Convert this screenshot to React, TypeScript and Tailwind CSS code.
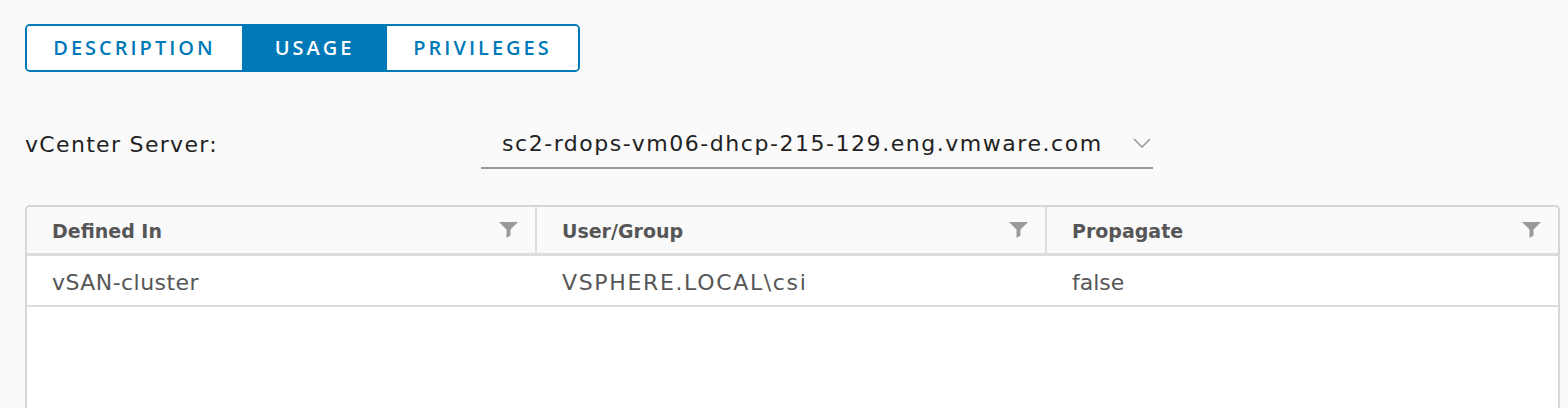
import React from "react";

function Filter() {
  return (
    <svg width="19" height="16" viewBox="0 0 19 16" className="shrink-0">
      <polygon points="0,0 19,0 11.5,7.5 11.5,13.5 7.5,16 7.5,7.5" fill="#9a9a9a" />
    </svg>
  );
}

function Chevron() {
  return (
    <svg width="18" height="10" viewBox="0 0 18 10">
      <polyline points="1,1 9,9 17,1" fill="none" stroke="#9a9a9a" strokeWidth="1.6" />
    </svg>
  );
}

const body = { fontFamily: "'DejaVu Sans', 'Open Sans', sans-serif" };

export default function App() {
  const cols = ["Defined In", "User/Group", "Propagate"];
  const vals = [
    { t: "vSAN-cluster", c: "tracking-[0.02em]" },
    { t: "VSPHERE.LOCAL\\csi", c: "tracking-[0.075em]" },
    { t: "false", c: "tracking-[0em]" },
  ];
  return (
    <div
      className="w-[1568px] h-[408px] overflow-hidden bg-[#fafafa] pl-[25px] pt-[24px] flex flex-col"
      style={{ fontFamily: "'Open Sans', Lato, sans-serif" }}
    >
      <div className="flex w-[555px] h-[48px] border-2 border-[#0079b8] rounded-[5px] overflow-hidden">
        <div className="w-[215px] flex items-center justify-center bg-white text-[#0079b8] text-[20px] font-semibold tracking-[0.15em]">
          DESCRIPTION
        </div>
        <div className="w-[145px] flex items-center justify-center bg-[#0079b8] text-white text-[20px] font-semibold tracking-[0.15em]">
          USAGE
        </div>
        <div className="flex-1 flex items-center justify-center bg-white text-[#0079b8] text-[20px] font-semibold tracking-[0.15em]">
          PRIVILEGES
        </div>
      </div>

      <div className="flex items-center mt-[47px] h-[50px]" style={body}>
        <div className="w-[456px] text-[22px] text-[#222] tracking-[0.06em]">vCenter Server:</div>
        <div className="w-[672px] h-[50px] border-b-2 border-[#999] flex items-center pl-[21px] pr-[2px] justify-between">
          <span className="text-[22px] text-[#222] tracking-[0.07em]">sc2-rdops-vm06-dhcp-215-129.eng.vmware.com</span>
          <Chevron />
        </div>
      </div>

      <div
        className="mt-[36px] w-[1535px] flex-1 border-2 border-b-0 border-[#d7d7d7] rounded-t-[5px] bg-white flex flex-col"
        style={body}
      >
        <div className="flex h-[49px] bg-[#fafafa] border-b-[3px] border-[#dddddd] rounded-t-[4px]">
          {cols.map((c, i) => (
            <div
              key={c}
              className={
                "flex items-center justify-between pl-[25px] pr-[17px] " +
                (i < 2 ? "w-[510px] border-r-2 border-[#dddddd]" : "flex-1 pr-[11px]")
              }
            >
              <span className="text-[19px] font-bold text-[#565656] pt-[3px]">{c}</span>
              <Filter />
            </div>
          ))}
        </div>
        <div className="flex h-[51px] border-b-2 border-[#dddddd] bg-white">
          {vals.map((v, i) => (
            <div
              key={i}
              className={"flex items-center pl-[25px] " + (i < 2 ? "w-[510px]" : "flex-1")}
            >
              <span className={"text-[22px] text-[#565656] pt-[3px] " + v.c}>{v.t}</span>
            </div>
          ))}
        </div>
      </div>
    </div>
  );
}
